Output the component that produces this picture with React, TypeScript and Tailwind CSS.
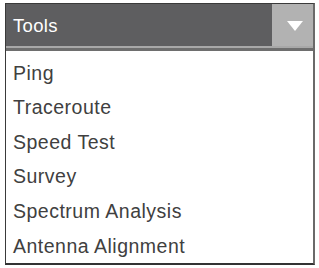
import React from 'react';

const items = ['Ping', 'Traceroute', 'Speed Test', 'Survey', 'Spectrum Analysis', 'Antenna Alignment'];

export default function App() {
  return (
    <div className="w-[319px] h-[268px] bg-white pl-[5px] pt-[3px]" style={{ fontFamily: '"Liberation Sans", Arial, sans-serif' }}>
      <div className="w-[310px] h-[262px] border border-[#3a3a3a] border-r-2 border-b-2 border-r-[#6a6a6a] border-b-[#333] flex flex-col">
        {/* Header */}
        <div className="flex h-[42px] shrink-0 bg-[#5e5e60]">
          <div className="flex-1 flex items-center pl-[7px] text-white text-[18.5px] tracking-[0.3px] pt-[1px]">Tools</div>
          <div className="w-[41px] bg-[#b2b2b2] flex items-center justify-center pt-[2px] pl-[4px]">
            <svg width="16" height="10" viewBox="0 0 16 10">
              <polygon points="0,0 16,0 8,10" fill="#ffffff" />
            </svg>
          </div>
        </div>
        <div className="h-[2px] bg-[#a8a8a8] shrink-0" />
        <div className="h-[3px] bg-[#6e6e6e] shrink-0" />
        {/* List */}
        <div className="flex flex-col pl-[7px] pt-[5px] text-[#404040] text-[19.5px] tracking-[0.5px]">
          {items.map((it) => (
            <div key={it} className="h-[34.6px] flex items-center">{it}</div>
          ))}
        </div>
      </div>
    </div>
  );
}
